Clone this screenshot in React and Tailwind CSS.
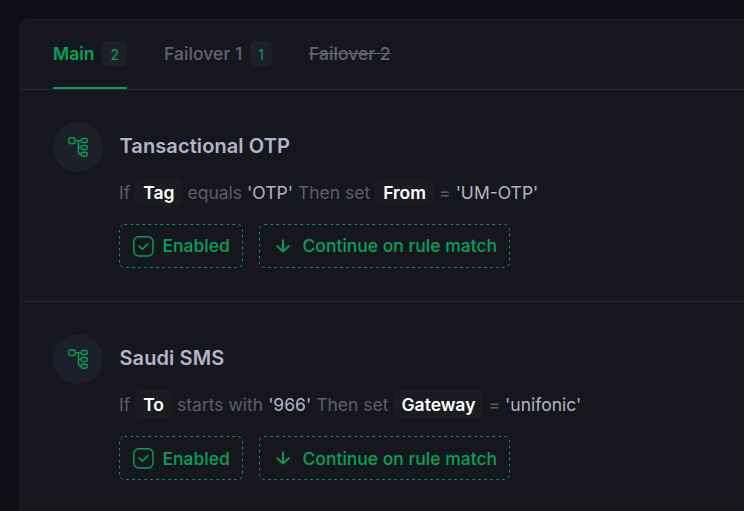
import React from 'react';

const tabs = [
  { label: 'Main', count: 2, active: true },
  { label: 'Failover 1', count: 1 },
  { label: 'Failover 2', disabled: true },
];

const rules = [
  { title: 'Tansactional OTP', field: 'Tag', operator: 'equals', value: "'OTP'", target: 'From', result: "'UM-OTP'" },
  { title: 'Saudi SMS', field: 'To', operator: 'starts with', value: "'966'", target: 'Gateway', result: "'unifonic'" },
];

const TreeIcon = () => (
  <svg width="20" height="20" viewBox="0 0 20 20" fill="none" stroke="currentColor" strokeWidth="1.4">
    <rect x="0.7" y="0.8" width="6.4" height="5.8" rx="2.2" />
    <rect x="13.2" y="1.5" width="6.1" height="4" rx="1.6" />
    <rect x="13.2" y="8.5" width="6.1" height="4" rx="1.6" />
    <rect x="13.2" y="15.2" width="6.1" height="4" rx="1.6" />
    <path d="M7.1 3.6h6.1M10.4 3.6v11.2q0 2.4 2.4 2.4h.4M10.4 10.5h2.8" />
  </svg>
);

const CheckIcon = () => (
  <svg width="21" height="21" viewBox="0 0 21 21" fill="none" stroke="currentColor" strokeWidth="1.4">
    <rect x="0.8" y="0.8" width="19.2" height="19.2" rx="5" />
    <path d="M5.6 9.6l3.8 3.6 6-6" strokeWidth="1.6" />
  </svg>
);

const ArrowIcon = () => (
  <svg width="14" height="14" viewBox="0 0 14 14" fill="none" stroke="currentColor" strokeWidth="1.9" strokeLinecap="round" strokeLinejoin="round">
    <path d="M7 1.2v11.4M1.2 7.1L7 12.6l5.8-5.5" />
  </svg>
);

// Dashed outline with wider gaps than border-dashed gives
const DashedOutline = ({ width }) => (
  <svg className="absolute inset-0" width={width} height="44" fill="none" stroke="currentColor">
    <rect x="0.5" y="0.5" width={width - 1} height="43" rx="5" strokeDasharray="2.5 3.5" />
  </svg>
);

const Token = ({ children }) => (
  <span className="flex h-7 items-center rounded-md bg-[#1b1c20] px-2 pt-0.5 font-semibold text-white">{children}</span>
);

const Rule = ({ rule, last }) => (
  <div className="flex h-[212px] shrink-0 gap-4 border-b border-[#26272c] pt-8 pl-8">
    <div className="flex size-[50px] shrink-0 items-center justify-center rounded-full bg-[#1e2029] text-[#07a15c]">
      <TreeIcon />
    </div>
    <div className="whitespace-nowrap">
      <h2 className="pl-[0.5px] text-[20px] leading-[48px] font-semibold tracking-[0.1px] text-[#b3b4c9]">{rule.title}</h2>
      <div className="mt-2 flex h-7 items-center text-[17.5px] text-[#5d5e6c]">
        <span className="mr-[5px] pt-0.5">If</span>
        <Token>{rule.field}</Token>
        <span className="ml-[5px] pt-0.5">{rule.operator}</span>
        <span className="ml-[5px] pt-0.5 text-[#b3b4c9]">{rule.value}</span>
        <span className="mr-[5px] ml-[5px] pt-0.5">Then set</span>
        <Token>{rule.target}</Token>
        <span className="ml-[5px] pt-0.5">=</span>
        <span className="ml-[5px] pt-0.5 text-[#b3b4c9]">{rule.result}</span>
      </div>
      <div className="mt-[18px] flex gap-4 text-[17.5px] font-medium text-[#07a15c]">
        <div className="relative flex h-11 w-[124px] items-center pl-[14px]">
          <DashedOutline width={124} />
          <CheckIcon />
          <span className={`ml-[8.5px] ${last ? 'pt-0.5' : ''}`}>Enabled</span>
        </div>
        <div className="relative flex h-11 w-[251px] items-center pl-[17px]">
          <DashedOutline width={251} />
          <ArrowIcon />
          <span className={`ml-[12.5px] ${last ? 'pt-0.5' : ''}`}>Continue on rule match</span>
        </div>
      </div>
    </div>
  </div>
);

const App = () => (
  <div className="h-[511px] w-[744px] overflow-hidden bg-[#0f1014] pt-[19px] pl-5 font-['Inter',sans-serif]">
    <div className="h-[520px] rounded-tl-[10px] border-t border-l border-[#212228] bg-[#16171c]">

      {/* Tabs */}
      <div className="flex h-[70px] border-b border-[#2a2b30] pl-8 text-[17.5px] font-medium text-[#64656f]">
        {tabs.map((tab) => (
          <div
            key={tab.label}
            className={`mr-[37px] flex h-[69px] items-center border-b-2 whitespace-nowrap ${tab.active ? 'border-[#07a15c] font-semibold text-[#07a15c]' : 'border-transparent'}`}
          >
            <span className={`pt-0.5 ${tab.active ? '' : 'tracking-[0.06px]'} ${tab.disabled ? 'line-through' : ''}`}>{tab.label}</span>
            {tab.count && (
              <span className="ml-2 flex h-[25px] items-center rounded-md bg-[#1e2029] px-2 pt-px text-[14px] font-normal text-[#07a15c]">{tab.count}</span>
            )}
          </div>
        ))}
      </div>

      {/* Rules */}
      {rules.map((rule, index) => (
        <Rule key={rule.title} rule={rule} last={index === rules.length - 1} />
      ))}
    </div>
  </div>
);

export default App;
